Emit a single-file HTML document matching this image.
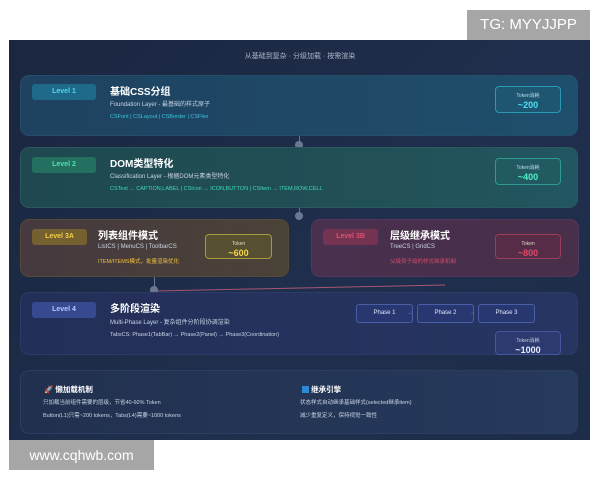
<!DOCTYPE html><html><head><meta charset="utf-8"><style>
*{margin:0;padding:0;box-sizing:border-box}
body{width:600px;height:480px;background:#fff;position:relative;overflow:hidden;font-family:"Liberation Sans","Noto Sans CJK SC",sans-serif}
.abs{position:absolute}
#panel{left:9px;top:40px;width:581px;height:400px;background:linear-gradient(135deg,#1b2640,#1f2f4d 60%,#1d2c48)}
.card{position:absolute;border-radius:9px}
.badge{position:absolute;border-radius:3px;font-size:7px;font-weight:bold;text-align:center;line-height:16px}
.t{position:absolute;color:#fff;font-weight:bold;font-size:10px;white-space:nowrap}
.s{position:absolute;font-size:6px;color:#c8d3e4;white-space:nowrap}
.tok{position:absolute;border-radius:4px;text-align:center;font-size:5px;line-height:8px;padding-top:5px}
.tok b{display:block;font-size:9px;line-height:11px}
.ph{position:absolute;top:304px;width:57px;height:19px;border:1px solid #4a5ea8;background:#283770;border-radius:3px;color:#dfe6ff;font-size:6px;text-align:center;line-height:17px}
.dot{position:absolute;width:8px;height:8px;border-radius:50%;background:#6a7890}
.ln{position:absolute;width:1px;background:#6a7890}
</style></head><body>
<div class="abs" style="left:467px;top:10px;width:123px;height:30px;background:#a6a6a6;color:#fff;font-size:15px;line-height:30px;text-align:center">TG: MYYJJPP</div>
<div id="panel" class="abs"></div>
<div class="s" style="left:0;width:600px;text-align:center;top:51px;font-size:7px;color:#aab6c8">从基础到复杂 · 分级加载 · 按需渲染</div>

<div class="card" style="left:20px;top:75px;width:558px;height:61px;background:linear-gradient(90deg,#1e4260,#1f4b68 70%,#1e4f6c);border:1px solid #244e6c"></div>
<div class="badge" style="left:32px;top:84px;width:64px;background:#1f6a8a;color:#4fd8ef">Level 1</div>
<div class="t" style="left:110px;top:83px">基础CSS分组</div>
<div class="s" style="left:110px;top:99px">Foundation Layer - 最基础的样式原子</div>
<div class="s" style="left:110px;top:114px;font-size:5.5px;color:#38c6e0">CSFont | CSLayout | CSBorder | CSFlex</div>
<div class="tok" style="left:495px;top:86px;width:66px;height:27px;border:1px solid #2a9ab4;background:#1e5672;color:#bde;"><span>Token消耗</span><b style="color:#4fe0f5">~200</b></div>

<div class="ln" style="left:299px;top:136px;height:8px"></div><div class="dot" style="left:295px;top:141px"></div>

<div class="card" style="left:20px;top:147px;width:558px;height:61px;background:linear-gradient(90deg,#1f4850,#225158 70%,#225662);border:1px solid #285a5e"></div>
<div class="badge" style="left:32px;top:157px;width:64px;background:#237060;color:#4ee2b0">Level 2</div>
<div class="t" style="left:110px;top:155px">DOM类型特化</div>
<div class="s" style="left:110px;top:171px">Classification Layer - 根据DOM元素类型特化</div>
<div class="s" style="left:110px;top:186px;font-size:5.5px;color:#3fdcb5">CSText → CAPTION,LABEL | CSIcon → ICON,BUTTON | CSItem → ITEM,ROW,CELL</div>
<div class="tok" style="left:495px;top:158px;width:66px;height:27px;border:1px solid #2a9c90;background:#225a62;color:#bde"><span>Token消耗</span><b style="color:#4ff0c8">~400</b></div>

<div class="ln" style="left:299px;top:208px;height:8px"></div><div class="dot" style="left:295px;top:212px"></div>

<div class="card" style="left:20px;top:219px;width:269px;height:58px;background:linear-gradient(90deg,#46393f,#4a4338);border:1px solid #544a38"></div>
<div class="badge" style="left:32px;top:229px;width:55px;background:#756030;color:#f3cf4a">Level 3A</div>
<div class="t" style="left:98px;top:227px">列表组件模式</div>
<div class="s" style="left:98px;top:244px">ListCS | MenuCS | ToolbarCS</div>
<div class="s" style="left:98px;top:257px;font-size:5.5px;color:#f0c040">ITEM/ITEMS模式，批量渲染优化</div>
<div class="tok" style="left:205px;top:234px;width:67px;height:25px;border:1px solid #a89a40;background:#565030;color:#ddc"><span>Token</span><b style="color:#f7d44a">~600</b></div>

<div class="card" style="left:311px;top:219px;width:268px;height:58px;background:linear-gradient(90deg,#48314e,#482f4a);border:1px solid #54385a"></div>
<div class="badge" style="left:323px;top:229px;width:55px;background:#743350;color:#e25070">Level 3B</div>
<div class="t" style="left:390px;top:227px">层级继承模式</div>
<div class="s" style="left:390px;top:244px">TreeCS | GridCS</div>
<div class="s" style="left:390px;top:257px;font-size:5.5px;color:#d04a6a">父级到子级的样式继承机制</div>
<div class="tok" style="left:495px;top:234px;width:66px;height:25px;border:1px solid #9a3c5a;background:#562c46;color:#ddc"><span>Token</span><b style="color:#e04a6a">~800</b></div>

<div class="ln" style="left:154px;top:277px;height:10px"></div>
<svg class="abs" style="left:0;top:0" width="600" height="480"><line x1="155" y1="291" x2="445" y2="285" stroke="#a85575" stroke-width="1"/></svg>
<div class="dot" style="left:150px;top:286px"></div>

<div class="card" style="left:20px;top:292px;width:558px;height:63px;background:linear-gradient(90deg,#232f58,#273563);border:1px solid #2c3a68"></div>
<div class="badge" style="left:32px;top:302px;width:64px;background:#374a90;color:#b9c8ff">Level 4</div>
<div class="t" style="left:110px;top:300px">多阶段渲染</div>
<div class="s" style="left:110px;top:317px">Multi-Phase Layer - 复杂组件分阶段协调渲染</div>
<div class="s" style="left:110px;top:332px;font-size:5.5px">TabsCS: Phase1(TabBar) → Phase2(Panel) → Phase3(Coordination)</div>
<div class="ph" style="left:356px">Phase 1</div><div class="s" style="left:407px;top:310px;color:#889">→</div>
<div class="ph" style="left:417px">Phase 2</div><div class="s" style="left:469px;top:310px;color:#889">→</div>
<div class="ph" style="left:478px">Phase 3</div>
<div class="tok" style="left:495px;top:331px;width:66px;height:24px;border:1px solid #44579e;background:#2c3a70;color:#ccd"><span>Token消耗</span><b style="color:#e6ecff">~1000</b></div>

<div class="card" style="left:20px;top:370px;width:558px;height:64px;background:linear-gradient(90deg,#22304f,#263a5c);border:1px solid #2c3d62"></div>
<div class="t" style="left:44px;top:384px;font-size:7.5px">🚀 懒加载机制</div>
<div class="s" style="left:43px;top:398px;font-size:5.5px">只加载当前组件需要的层级，节省40-60% Token</div>
<div class="s" style="left:43px;top:411px;font-size:5.5px">Button(L1)只需~200 tokens，Tabs(L4)需要~1000 tokens</div>
<div class="t" style="left:302px;top:384px;font-size:7.5px"><span style="display:inline-block;width:7px;height:7px;background:#2a8ad8;vertical-align:-1px"></span> 继承引擎</div>
<div class="s" style="left:300px;top:398px;font-size:5.5px">状态样式自动继承基础样式(selected继承item)</div>
<div class="s" style="left:300px;top:411px;font-size:5.5px">减少重复定义，保持视觉一致性</div>

<div class="abs" style="left:9px;top:440px;width:145px;height:30px;background:#a6a6a6;color:#fff;font-size:14px;line-height:30px;text-align:center">www.cqhwb.com</div>
</body></html>
